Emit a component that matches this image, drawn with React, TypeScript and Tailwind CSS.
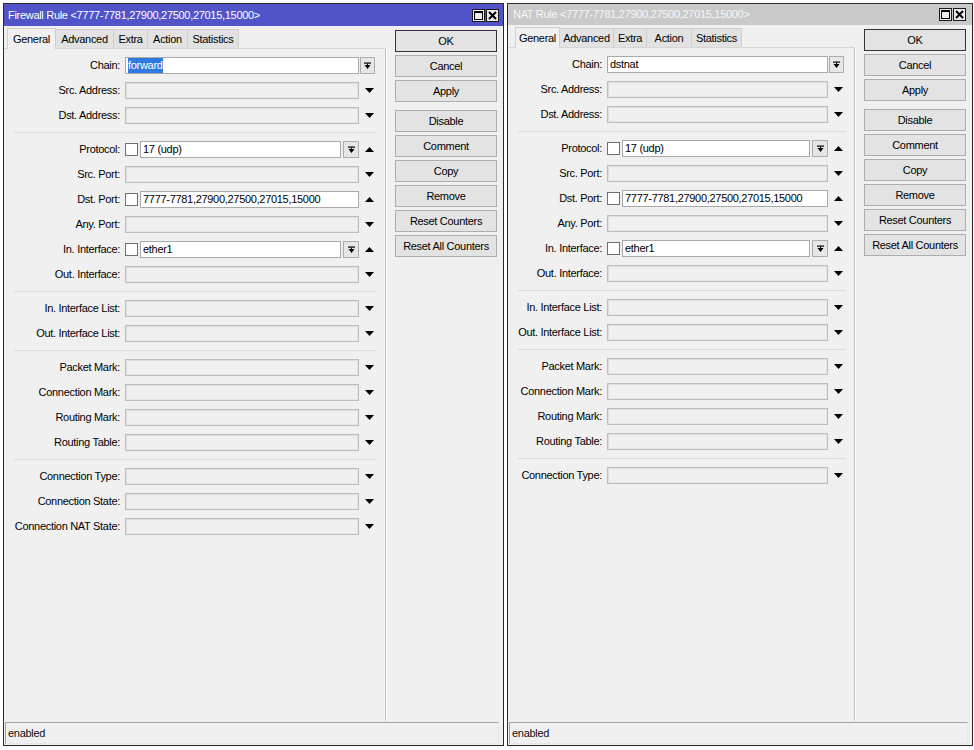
import React from "react";

type R = { l: string; k: "e" | "c" | "k"; v?: string; sel?: boolean; drop?: boolean };

type Cfg = {
  title: string;
  active: boolean;
  winCls: string;
  titleCls: string;
  panelCls: string;
  labelCls: string;
  fullCls: string;
  dropInCls: string;
  noDropInCls: string;
  tabPadCls: string;
  tabs: { name: string; cls: string }[];
  titleBtnPadCls: string;
  titlePadCls: string;
  sections: R[][];
};

function DownTri() {
  return (
    <svg width="9" height="5" viewBox="0 0 9 5">
      <polygon points="0,0 9,0 4.5,5" fill="#000" />
    </svg>
  );
}

function UpTri() {
  return (
    <svg width="9" height="5" viewBox="0 0 9 5">
      <polygon points="0,5 9,5 4.5,0" fill="#000" />
    </svg>
  );
}

function DropBtn({ cls }: { cls: string }) {
  return (
    <div className={`h-[17px] ${cls} shrink-0 border border-[#acacac] bg-[#e6e6e6] flex items-center justify-center`}>
      <svg width="7" height="8" viewBox="0 0 7 8">
        <rect x="0" y="0.5" width="7" height="1.2" fill="#000" />
        <polygon points="0.5,3 6.5,3 3.5,7" fill="#000" />
        <rect x="3" y="1.5" width="1" height="2" fill="#000" />
      </svg>
    </div>
  );
}

function Row({ r, c }: { r: R; c: Cfg }) {
  return (
    <div className="flex items-center h-[25px]">
      <div className={`${c.labelCls} shrink-0 text-right whitespace-nowrap`}>{r.l}</div>
      <div className="ml-[5px] flex items-center">
        {r.k === "e" && (
          <div className={`${c.fullCls} h-[17px] border border-[#bdbdbd] bg-[#f0f0f0] shadow-[inset_1px_1px_0_#dedede,inset_-1px_-1px_0_#e6e6e6]`} />
        )}
        {r.k === "c" && (
          <div className={`${c.fullCls} h-[17px] border border-[#a9a9a9] bg-white flex items-center pl-[2px] whitespace-nowrap`}>
            {r.sel ? (
              <span className="bg-[#2f7ae0] text-white leading-[15px] inline-block">{r.v}</span>
            ) : (
              <span>{r.v}</span>
            )}
          </div>
        )}
        {r.k === "k" && (
          <>
            <div className="w-[13px] h-[13px] shrink-0 border border-[#6f6f6f] bg-white" />
            <div className={`ml-[2px] ${r.drop ? c.dropInCls : c.noDropInCls} h-[17px] border border-[#a9a9a9] bg-white flex items-center pl-[2px] whitespace-nowrap overflow-hidden`}>
              {r.v}
            </div>
            {r.drop && (
              <div className="ml-[2px]">
                <DropBtn cls="w-[16px]" />
              </div>
            )}
          </>
        )}
      </div>
      <div className="w-[20px] shrink-0 flex items-center justify-center">
        {r.k === "e" && <DownTri />}
        {r.k === "k" && <UpTri />}
        {r.k === "c" && (
          <div className="-ml-[3px]">
            <DropBtn cls="w-[15px]" />
          </div>
        )}
      </div>
    </div>
  );
}

const BUTTONS = ["OK", "Cancel", "Apply", "Disable", "Comment", "Copy", "Remove", "Reset Counters", "Reset All Counters"];

function Win({ c }: { c: Cfg }) {
  return (
    <div className={`${c.winCls} h-[743px] shrink-0 border border-[#2a2a2a] bg-[#f0f0f0] flex flex-col`}>
      <div
        className={`${c.titleCls} shrink-0 flex items-center justify-between ${c.active ? "bg-[#5054c8] text-white" : "bg-[#c9c9c9] text-[#f7f7f7]"}`}
      >
        <span className={`${c.titlePadCls} whitespace-nowrap`}>{c.title}</span>
        <div className={`flex items-center gap-[1px] ${c.titleBtnPadCls}`}>
          <div className="w-[13px] h-[13px] border border-[#1a1a1a] bg-[#ececec] flex items-center justify-center">
            <svg width="9" height="9" viewBox="0 0 9 9">
              <rect x="0.5" y="0.5" width="8" height="8" fill="none" stroke="#000" />
              <rect x="0" y="0" width="9" height="2" fill="#000" />
            </svg>
          </div>
          <div className="w-[13px] h-[13px] border border-[#1a1a1a] bg-[#ececec] flex items-center justify-center">
            <svg width="9" height="9" viewBox="0 0 9 9">
              <path d="M1 1 L8 8 M8 1 L1 8" stroke="#000" strokeWidth="2" />
            </svg>
          </div>
        </div>
      </div>
      <div className="flex flex-1 min-h-0">
        <div className={`${c.panelCls} shrink-0 flex flex-col`}>
          <div className={`h-[22px] shrink-0 flex items-end ${c.tabPadCls} relative z-10`}>
            {c.tabs.map((t, i) =>
              i === 0 ? (
                <div
                  key={t.name}
                  className={`${t.cls} h-[21px] -mb-[1px] border border-b-0 border-[#cfcfcf] bg-[#f0f0f0] flex items-center justify-center`}
                >
                  {t.name}
                </div>
              ) : (
                <div
                  key={t.name}
                  className={`${t.cls} h-[19px] border border-l-0 border-b-0 border-[#cfcfcf] bg-[#e2e2e2] flex items-center justify-center`}
                >
                  {t.name}
                </div>
              )
            )}
          </div>
          <div className="flex-1 border-t border-r border-t-[#d6d6d6] border-r-[#c3c3c3] shadow-[1px_0_0_#fbfbfb]">
            {c.sections.map((s, i) => (
              <div key={i}>
                <div className="py-[4px]">
                  {s.map((r) => (
                    <Row key={r.l} r={r} c={c} />
                  ))}
                </div>
                {i < c.sections.length - 1 && <div className="h-px bg-[#dadada] ml-[10px] mr-[8px]" />}
              </div>
            ))}
          </div>
        </div>
        <div className="flex-1 pl-[9px] pt-[4px] pr-[5px] flex flex-col">
          {BUTTONS.map((b, i) => (
            <div
              key={b}
              className={`h-[22px] w-[102px] shrink-0 flex items-center justify-center border bg-[#e3e3e3] whitespace-nowrap ${
                i === 0 ? "border-[#333333]" : "border-[#adadad]"
              } ${i === 0 ? "" : i === 3 ? "mt-[8px]" : "mt-[3px]"}`}
            >
              {b}
            </div>
          ))}
        </div>
      </div>
      <div className="h-[22px] shrink-0 mt-[1px] mb-[1px] ml-[1px] mr-[4px] border-t border-l border-t-[#a3a3a3] border-l-[#a3a3a3] border-r border-b border-r-[#e8e8e8] border-b-[#e8e8e8] flex items-center pl-[2px] text-[#111]">
        enabled
      </div>
    </div>
  );
}

const common = (chain: R, last: R[]): R[][] => [
  [chain, { l: "Src. Address:", k: "e" }, { l: "Dst. Address:", k: "e" }],
  [
    { l: "Protocol:", k: "k", v: "17 (udp)", drop: true },
    { l: "Src. Port:", k: "e" },
    { l: "Dst. Port:", k: "k", v: "7777-7781,27900,27500,27015,15000" },
    { l: "Any. Port:", k: "e" },
    { l: "In. Interface:", k: "k", v: "ether1", drop: true },
    { l: "Out. Interface:", k: "e" },
  ],
  [
    { l: "In. Interface List:", k: "e" },
    { l: "Out. Interface List:", k: "e" },
  ],
  [
    { l: "Packet Mark:", k: "e" },
    { l: "Connection Mark:", k: "e" },
    { l: "Routing Mark:", k: "e" },
    { l: "Routing Table:", k: "e" },
  ],
  last,
];

const LEFT: Cfg = {
  title: "Firewall Rule <7777-7781,27900,27500,27015,15000>",
  active: true,
  winCls: "w-[501px]",
  titleCls: "h-[22px]",
  panelCls: "w-[382px]",
  labelCls: "w-[116px]",
  fullCls: "w-[234px]",
  dropInCls: "w-[201px]",
  noDropInCls: "w-[219px]",
  tabPadCls: "pl-[3px]",
  tabs: [
    { name: "General", cls: "w-[49px]" },
    { name: "Advanced", cls: "w-[58px]" },
    { name: "Extra", cls: "w-[34px]" },
    { name: "Action", cls: "w-[40px]" },
    { name: "Statistics", cls: "w-[51px]" },
  ],
  titleBtnPadCls: "pr-[4px]",
  titlePadCls: "pl-[4px]",
  sections: common({ l: "Chain:", k: "c", v: "forward", sel: true }, [
    { l: "Connection Type:", k: "e" },
    { l: "Connection State:", k: "e" },
    { l: "Connection NAT State:", k: "e" },
  ]),
};

const RIGHT: Cfg = {
  title: "NAT Rule <7777-7781,27900,27500,27015,15000>",
  active: false,
  winCls: "w-[466px]",
  titleCls: "h-[21px]",
  panelCls: "w-[347px]",
  labelCls: "w-[94px]",
  fullCls: "w-[221px]",
  dropInCls: "w-[188px]",
  noDropInCls: "w-[206px]",
  tabPadCls: "pl-[7px]",
  tabs: [
    { name: "General", cls: "w-[45px]" },
    { name: "Advanced", cls: "w-[54px]" },
    { name: "Extra", cls: "w-[33px]" },
    { name: "Action", cls: "w-[45px]" },
    { name: "Statistics", cls: "w-[50px]" },
  ],
  titleBtnPadCls: "pr-[6px]",
  titlePadCls: "pl-[5px]",
  sections: common({ l: "Chain:", k: "c", v: "dstnat" }, [{ l: "Connection Type:", k: "e" }]),
};

export default function App() {
  return (
    <div className="w-[974px] h-[750px] bg-white flex items-start gap-[3px] pl-[3px] pt-[3px] overflow-hidden font-['Liberation_Sans',Arial,sans-serif] text-[11px] tracking-[-0.3px] text-black">
      <Win c={LEFT} />
      <Win c={RIGHT} />
    </div>
  );
}
